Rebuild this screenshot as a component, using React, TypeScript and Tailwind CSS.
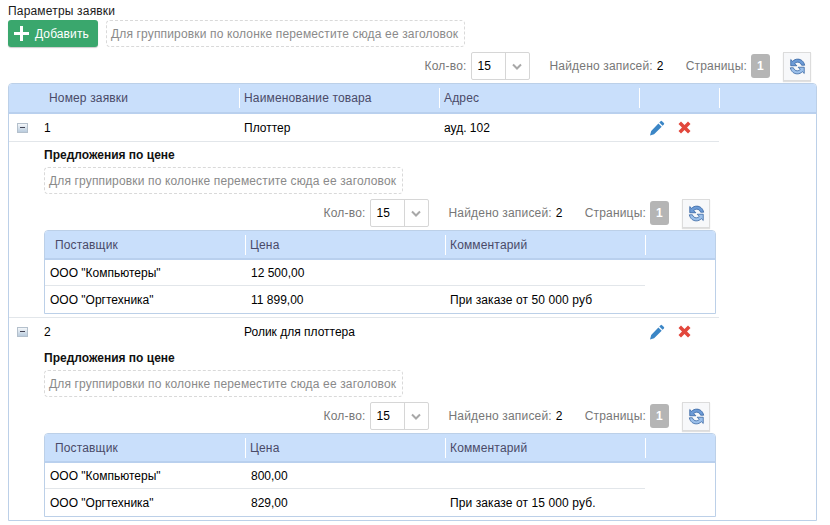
const HINT = 'Для группировки по колонке переместите сюда ее заголовок'

function GroupPanel() {
  return (
    <div className="flex h-[27px] w-[359px] items-center rounded-[4px] border border-dashed border-[#d9d9d9] pl-[4px] text-[12px] tracking-[0.15px] text-[#8a8a8a] whitespace-nowrap">
      {HINT}
    </div>
  )
}

function RefreshIcon() {
  return (
    <svg width="19" height="19" viewBox="0 0 18 18" fill="none">
      <path d="M15.8 7.8C15.1 4.2 12.3 2 9.2 2 7.3 2 5.6 2.8 4.4 4.1L2.6 2.4v5.9h5.8L6.4 6.2c.7-.8 1.7-1.3 2.8-1.3 1.7 0 3.1 1.1 3.7 2.9z" fill="#6d9bd6" stroke="#2f5f9e" strokeWidth="0.7" />
      <path d="M2.2 10.2C2.9 13.8 5.7 16 8.8 16c1.9 0 3.6-.8 4.8-2.1l1.8 1.7V9.7H9.6l2 2.1c-.7.8-1.7 1.3-2.8 1.3-1.7 0-3.1-1.1-3.7-2.9z" fill="#9cc0ea" stroke="#2f5f9e" strokeWidth="0.7" />
    </svg>
  )
}

function PagerBar() {
  return (
    <div className="flex h-[28px] items-center justify-end text-[12px] tracking-[0.18px] text-[#777] whitespace-nowrap">
      <span>Кол-во:</span>
      <div className="ml-[4px] flex h-[28px] w-[59px] rounded-[2px] border border-[#d6d6d6]">
        <div className="w-[33px] pt-[4px] pl-[6px] text-black">15</div>
        <div className="flex flex-1 items-center justify-center border-l border-[#d6d6d6]">
          <svg width="10" height="7" viewBox="0 0 10 7" fill="none">
            <path d="M1 1.5 5 5.5 9 1.5" stroke="#a8a8a8" strokeWidth="2" />
          </svg>
        </div>
      </div>
      <span className="ml-[20px]">Найдено записей:</span>
      <span className="ml-[4px] text-black">2</span>
      <span className="ml-[22px]">Страницы:</span>
      <div className="ml-[4px] flex h-[24px] w-[19px] items-center justify-center rounded-[3px] bg-[#b5b5b5] font-bold text-white">1</div>
      <div className="ml-[13px] flex h-[29px] w-[28px] items-center justify-center self-start border border-[#dcdcdc] bg-[#f7f8fa] shadow-[0_1px_1px_rgba(0,0,0,0.12)]">
        <RefreshIcon />
      </div>
    </div>
  )
}

function HeadCell({ className, label }: { className: string; label?: string }) {
  return (
    <div className={`flex h-[20px] items-center border-r border-white text-[12px] tracking-[0.15px] text-[#4a4a68] ${className}`}>
      {label}
    </div>
  )
}

type Offer = { supplier: string; price: string; comment: string }

function OffersTable({ offers }: { offers: Offer[] }) {
  return (
    <div className="w-[672px] rounded-t-[4px] border border-[#bcd0e8]">
      <div className="flex h-[29px] items-center rounded-t-[3px] border-b-[2px] border-[#b9d0ee] bg-[#c9dffb]">
        <HeadCell className="w-[201px] pl-[10px]" label="Поставщик" />
        <HeadCell className="w-[200px] pl-[4px]" label="Цена" />
        <HeadCell className="w-[200px] pl-[4px]" label="Комментарий" />
      </div>
      {offers.map((offer, i) => (
        <div
          key={offer.supplier}
          className={`flex w-[600px] items-center text-[12px] text-black ${i === 0 ? 'h-[26px] border-b border-[#e2e6ea] pt-[1px]' : 'h-[27px]'}`}
        >
          <div className="w-[201px] pl-[5px]">{offer.supplier}</div>
          <div className="w-[200px] pl-[5px]">{offer.price}</div>
          <div className="w-[199px] pl-[4px] tracking-[0.1px]">{offer.comment}</div>
        </div>
      ))}
    </div>
  )
}

function RowActions() {
  return (
    <div className="flex w-[80px] items-center gap-[13px] pl-[10px]">
      <svg width="16" height="16" viewBox="0 0 16 16">
        <path d="M11.6 1.2a1 1 0 0 1 1.4 0l1.9 1.9a1 1 0 0 1 0 1.4L13.6 5.8 10.3 2.5zM9.4 3.4l3.3 3.3-7.6 7.6L1 15.5l1.2-4.4z" fill="#3b86c6" />
      </svg>
      <svg width="13" height="13" viewBox="0 0 13 13">
        <path d="M0.5 3 3 0.5 6.5 4 10 0.5 12.5 3 9 6.5 12.5 10 10 12.5 6.5 9 3 12.5 0.5 10 4 6.5z" fill="#e2473c" />
      </svg>
    </div>
  )
}

function Order({ num, name, address, offers, divider }: { num: string; name: string; address?: string; offers: Offer[]; divider?: boolean }) {
  return (
    <div>
      <div className="flex h-[27px] w-[710px] items-center text-[12px] text-black">
        <div className="w-[35px] pl-[8px]">
          <div className="flex h-[10px] w-[11px] items-center justify-center border border-[#b4c0cc] bg-gradient-to-b from-[#f4f7fa] to-[#b9cbdd]">
            <div className="h-px w-[5px] bg-[#445]" />
          </div>
        </div>
        <div className="w-[200px]">{num}</div>
        <div className="w-[200px]">{name}</div>
        <div className="w-[195px]">{address}</div>
        <RowActions />
      </div>
      {divider ? <div className="h-px w-[710px] bg-[#e2e6ea]" /> : null}
      <div className="w-[710px] pt-[4px] pl-[35px] pb-[3px]">
        <div className="h-[18px] text-[12px] leading-[18px] font-bold text-[#111]">Предложения по цене</div>
        <div className="mt-[3px]">
          <GroupPanel />
        </div>
        <div className="mt-[5px] w-[666px]">
          <PagerBar />
        </div>
        <div className="mt-[3px]">
          <OffersTable offers={offers} />
        </div>
      </div>
    </div>
  )
}

export default function App() {
  return (
    <div className="h-[525px] w-[830px] overflow-hidden bg-white pl-[8px] font-['Liberation_Sans',Arial,sans-serif]">
      <div className="h-[20px] pt-[4px] text-[12px] leading-[14px] tracking-[0.18px] text-[#1a1a1a]">Параметры заявки</div>
      <div className="flex gap-[8px]">
        <div className="flex h-[27px] w-[90px] items-center gap-[6px] rounded-[3px] bg-[#3aa76d] pl-[6px] text-[12px] tracking-[0.1px] text-white shadow-[0_1px_1px_rgba(0,0,0,0.2)]">
          <svg width="15" height="15" viewBox="0 0 15 15">
            <path d="M6 0h3v6h6v3H9v6H6V9H0V6h6z" fill="#fff" />
          </svg>
          Добавить
        </div>
        <GroupPanel />
      </div>
      <div className="mt-[5px] mb-[3px] w-[803px]">
        <PagerBar />
      </div>
      <div className="h-[438px] w-[809px] rounded-t-[4px] border border-[#bcd0e8]">
        <div className="flex h-[30px] items-center rounded-t-[3px] border-b-[2px] border-[#b9d0ee] bg-[#c9dffb]">
          <HeadCell className="w-[231px] pl-[40px]" label="Номер заявки" />
          <HeadCell className="w-[200px] pl-[4px]" label="Наименование товара" />
          <HeadCell className="w-[200px] pl-[4px]" label="Адрес" />
          <HeadCell className="w-[80px]" />
        </div>
        <Order
          divider
          num="1"
          name="Плоттер"
          address="ауд. 102"
          offers={[
            { supplier: 'ООО "Компьютеры"', price: '12 500,00', comment: '' },
            { supplier: 'ООО "Оргтехника"', price: '11 899,00', comment: 'При заказе от 50 000 руб' },
          ]}
        />
        <div className="h-px w-[710px] bg-[#e2e6ea]" />
        <Order
          num="2"
          name="Ролик для плоттера"
          offers={[
            { supplier: 'ООО "Компьютеры"', price: '800,00', comment: '' },
            { supplier: 'ООО "Оргтехника"', price: '829,00', comment: 'При заказе от 15 000 руб.' },
          ]}
        />
      </div>
    </div>
  )
}
